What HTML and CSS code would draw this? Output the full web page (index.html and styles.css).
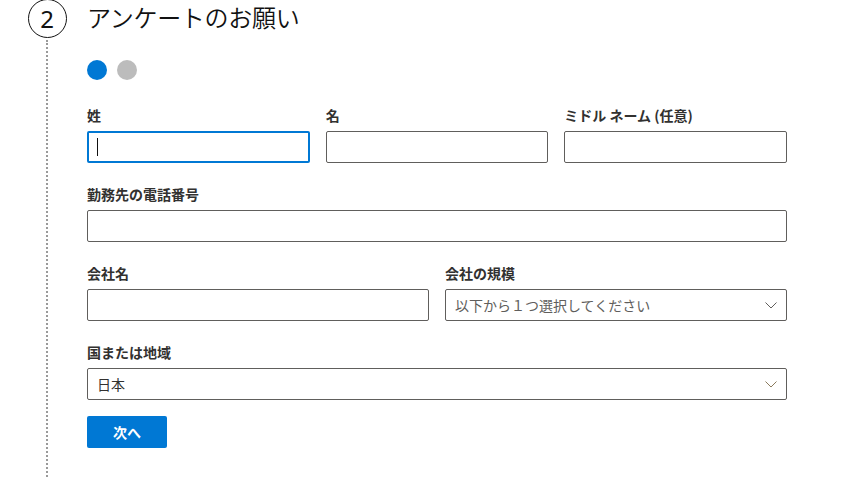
FILE: index.html
```html
<!DOCTYPE html>
<html lang="ja">
<head>
<meta charset="utf-8">
<link rel="stylesheet" href="styles.css">
</head>
<body>
<div class="step">
  <div class="rail">
    <div class="num">2</div>
    <div class="dots-line"></div>
  </div>
  <div class="content">
    <h1 class="title">アンケートのお願い</h1>
    <div class="pager">
      <span class="dot active"></span>
      <span class="dot"></span>
    </div>
    <div class="row three">
      <div class="field">
        <div class="label">姓</div>
        <div class="box focused"><span class="caret"></span></div>
      </div>
      <div class="field">
        <div class="label">名</div>
        <div class="box"></div>
      </div>
      <div class="field">
        <div class="label">ミドル ネーム (任意)</div>
        <div class="box"></div>
      </div>
    </div>
    <div class="row one">
      <div class="field">
        <div class="label">勤務先の電話番号</div>
        <div class="box"></div>
      </div>
    </div>
    <div class="row two">
      <div class="field">
        <div class="label">会社名</div>
        <div class="box"></div>
      </div>
      <div class="field">
        <div class="label">会社の規模</div>
        <div class="box select"><span class="placeholder">以下から１つ選択してください</span>
          <svg class="chev" width="12" height="7" viewBox="0 0 12 7"><path d="M0.5 0.5 L6 6 L11.5 0.5" fill="none" stroke="#605e5c" stroke-width="1"/></svg>
        </div>
      </div>
    </div>
    <div class="row one">
      <div class="field">
        <div class="label">国または地域</div>
        <div class="box select"><span class="value">日本</span>
          <svg class="chev" width="12" height="7" viewBox="0 0 12 7"><path d="M0.5 0.5 L6 6 L11.5 0.5" fill="none" stroke="#8a7a5c" stroke-width="1"/></svg>
        </div>
      </div>
    </div>
    <button class="next">次へ</button>
  </div>
</div>
</body>
</html>
```
FILE: styles.css
```css
html, body {
  margin: 0;
  padding: 0;
  background: #fff;
  height: 100%;
  overflow: hidden;
}
body {
  font-family: "Noto Sans CJK JP", "Noto Sans", sans-serif;
  color: #323130;
}
.step {
  display: flex;
  padding-left: 27px;
  gap: 20px;
  height: 477px;
}
.rail {
  width: 40px;
  display: flex;
  flex-direction: column;
  align-items: center;
}
.num {
  width: 37px;
  height: 37px;
  margin-top: -1px;
  border: 1.5px solid #111;
  border-radius: 50%;
  display: flex;
  align-items: center;
  justify-content: center;
  font-family: "Noto Sans", "Open Sans", sans-serif;
  font-size: 24px;
  font-weight: 400;
  color: #111;
  line-height: 1;
  flex-shrink: 0;
}
.dots-line {
  flex: 1;
  margin-top: 2px;
  border-left: 2px dotted #9a9a9a;
}
.content {
  width: 700px;
  display: flex;
  flex-direction: column;
}
.title {
  margin: 0;
  font-size: 24px;
  font-weight: 350;
  line-height: 34px;
  color: #111;
  letter-spacing: -0.3px;
}
.pager {
  display: flex;
  gap: 10px;
  margin-top: 26px;
  margin-bottom: 25px;
}
.dot {
  width: 20px;
  height: 20px;
  border-radius: 50%;
  background: #bcbcbc;
}
.dot.active {
  background: #0078d4;
}
.row {
  display: grid;
  gap: 16px;
  margin-bottom: 21px;
}
.row.three { grid-template-columns: 1fr 1fr 1fr; }
.row.two { grid-template-columns: 1fr 1fr; }
.row.one { grid-template-columns: 1fr; }
.label {
  font-size: 14px;
  font-weight: 700;
  line-height: 20px;
  margin-bottom: 6px;
  color: #323130;
}
.box {
  height: 32px;
  box-sizing: border-box;
  border: 1px solid #605e5c;
  border-radius: 2px;
  background: #fff;
  display: flex;
  align-items: center;
  padding: 0 9px;
  position: relative;
}
.box.focused {
  border: 2px solid #0078d4;
  padding: 0 8px;
}
.caret {
  width: 1px;
  height: 18px;
  background: #111;
}
.box.select {
  justify-content: space-between;
  font-size: 14px;
}
.placeholder {
  color: #605e5c;
}
.value {
  color: #323130;
}
.next {
  width: 80px;
  height: 32px;
  margin-top: -5px;
  border: none;
  border-radius: 2px;
  background: #0078d4;
  color: #fff;
  font-family: "Noto Sans CJK JP", sans-serif;
  font-size: 14px;
  font-weight: 700;
  padding: 0;
}
```
